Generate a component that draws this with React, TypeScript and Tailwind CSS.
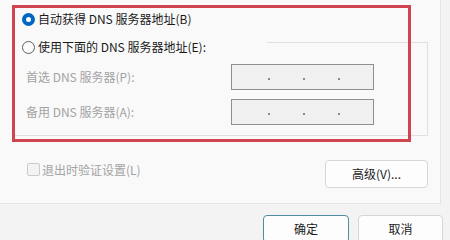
export default function App() {
  return (
    <div className="relative w-[450px] h-[240px] overflow-hidden bg-[#f3f3f3] text-[12px] text-[#1b1b1b] font-['Microsoft_YaHei_UI','Noto_Sans_CJK_SC',sans-serif]">
      <div className="h-[204px] w-[441px] bg-[#f9f9f9] border-r border-b border-[#e4e4e4]">
        <div className="pt-[11px] pl-[22px] h-[27px] flex items-center gap-[3px]">
          <span className="w-[13px] h-[13px] rounded-full bg-[#0067c0] flex items-center justify-center">
            <span className="w-[5px] h-[5px] rounded-full bg-white" />
          </span>
          <span className="leading-[16px]">自动获得 DNS 服务器地址(B)</span>
        </div>

        <div className="mt-[15px] ml-[14px] w-[414px] h-[94px] border border-[#e0e0e0]">
          <div className="-mt-[4px] w-[252px] h-[16px] bg-[#f9f9f9] pl-[7px] flex items-center gap-[3px]">
            <span className="w-[13px] h-[13px] rounded-full border border-[#5f5f5f] bg-[#fbfbfb]" />
            <span className="leading-[16px]">使用下面的 DNS 服务器地址(E):</span>
          </div>

          <div className="mt-[9px] pl-[11px] flex items-center text-[#a3a3a3]">
            <span className="w-[205px]">首选 DNS 服务器(P):</span>
            <IpBox />
          </div>
          <div className="mt-[9px] pl-[11px] flex items-center text-[#a3a3a3]">
            <span className="w-[205px]">备用 DNS 服务器(A):</span>
            <IpBox />
          </div>
        </div>

        <div className="mt-[24px] w-[428px] flex justify-between items-start">
          <div className="mt-[3px] pl-[27px] flex items-center gap-[2px] text-[#a3a3a3]">
            <span className="w-[13px] h-[13px] rounded-[2px] border border-[#cbcbcb] bg-[#f3f3f3]" />
            <span className="leading-[13px]">退出时验证设置(L)</span>
          </div>
          <button className="w-[103px] h-[28px] rounded-[4px] border border-[#d6d6d6] bg-[#fdfdfd] text-[12px]">
            高级(V)...
          </button>
        </div>
      </div>

      <div className="pt-[11px] pr-[7px] flex justify-end gap-[9px]">
        <button className="w-[86px] h-[28px] rounded-[4px] border border-[#4f8ca3] bg-[#fdfdfd] text-[12px]">
          确定
        </button>
        <button className="w-[85px] h-[28px] rounded-[4px] border border-[#d6d6d6] bg-[#fdfdfd] text-[12px]">
          取消
        </button>
      </div>

      <div className="absolute left-[12px] top-[5px] w-[399px] h-[137px] border-[3px] border-[#d04450]" />
    </div>
  );
}

function IpBox() {
  return (
    <div className="w-[143px] h-[26px] border border-[#8f8f8f] bg-[#f0f0f0] flex items-start pt-[13px] pl-[36px] gap-[33px]">
      <span className="w-[2px] h-[2px] bg-[#8a8a8a]" />
      <span className="w-[2px] h-[2px] bg-[#8a8a8a]" />
      <span className="w-[2px] h-[2px] bg-[#8a8a8a]" />
    </div>
  );
}
